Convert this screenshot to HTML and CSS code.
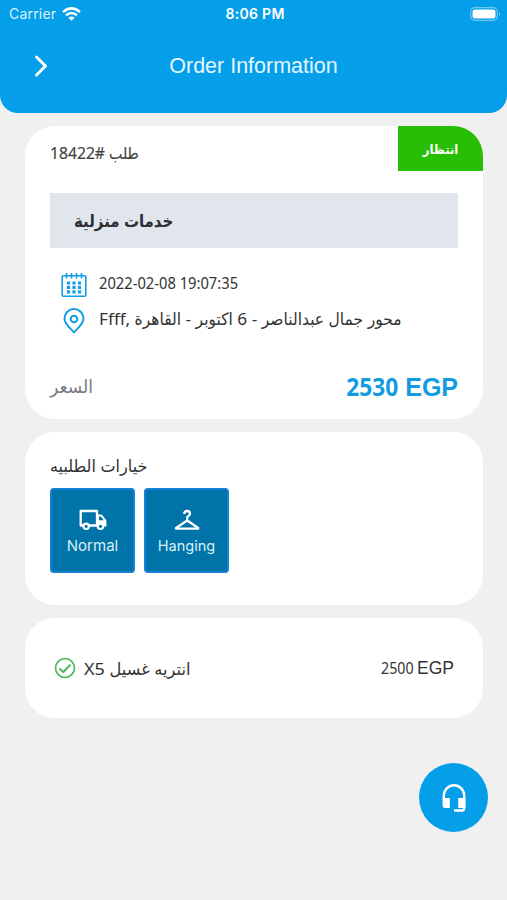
FILE: index.html
```html
<!DOCTYPE html>
<html lang="ar">
<head>
<meta charset="utf-8">
<title>Order Information</title>
<link rel="stylesheet" href="styles.css">
</head>
<body>
<header class="header">
  <div class="status">
    <div class="carrier"><span>Carrier</span>
      <svg width="19" height="14" viewBox="0 0 19 14" fill="none" stroke="#fff" stroke-width="2.5"><path d="M1 5.1Q9.500-2.300 18 5.100M4 8.300Q9.500 3.700 15 8.300"/><path d="M6.300 10.700Q9.500 8.200 12.700 10.700L9.500 13.800Z" fill="#fff" stroke="none"/></svg>
    </div>
    <div class="clock">8:06 PM</div>
    <svg class="battery" width="31" height="14" viewBox="0 0 31 14"><rect x=".7" y=".7" width="26.600" height="12.600" rx="4" fill="none" stroke="#6ec8f5" stroke-width="1.200"/><rect x="2.500" y="2.500" width="23" height="9" rx="2.300" fill="#fff"/><path d="M29 5q2.500 2 0 4z" fill="#6ec8f5"/></svg>
  </div>
  <div class="titlebar">
    <svg class="chevron" width="14" height="24" viewBox="0 0 14 24" fill="none" stroke="#fff" stroke-width="3" stroke-linecap="round" stroke-linejoin="round"><path d="M2.500 3L11.500 12L2.500 21"/></svg>
    <h1>Order Information</h1>
  </div>
</header>
<main>
  <section class="card order">
    <div class="order-top">
      <div class="order-id" dir="rtl"><span class="t-id">طلب #&rlm;18422</span></div>
      <div class="badge"><span class="t-badge">انتظار</span></div>
    </div>
    <div class="category"><span class="t-cat">خدمات منزلية</span></div>
    <div class="detail">
      <svg width="26" height="26" viewBox="0 0 26 26" fill="none" stroke="#139de5" stroke-width="1.600"><rect x="1.200" y="3.800" width="23.600" height="20.400" rx="1"/><path d="M5.500 1V6.500M10.500 1V6.500M15.500 1V6.500M20.500 1V6.500"/><path stroke-width="3.200" stroke-dasharray="3.200 2.300" d="M5.900 11H20.100M5.900 15.400H20.100M5.900 19.800H20.100"/></svg>
      <span class="t-date">2022-02-08 19:07:35</span>
    </div>
    <div class="detail place">
      <svg width="26" height="26" viewBox="0 0 26 26" fill="none" stroke="#139de5" stroke-width="2"><path d="M13 24.500C11 21.500 3.500 16.500 3.500 10.500A9.500 9.500 0 0 1 22.500 10.500C22.500 16.500 15 21.500 13 24.500Z" stroke-linejoin="round"/><circle cx="13" cy="11" r="3.300"/></svg>
      <span class="t-addr">Ffff, محور جمال عبدالناصر - 6 اكتوبر - القاهرة</span>
    </div>
    <div class="total"><span class="t-label">السعر</span><strong><span class="t-num">2530</span> <span class="t-cur">EGP</span></strong></div>
  </section>
  <section class="card options">
    <h2><span class="t-opt">خيارات الطلبيه</span></h2>
    <div class="tiles">
      <div class="tile">
        <svg width="28" height="22" viewBox="0 0 28 22"><path fill="none" stroke="#fff" stroke-width="2.300" stroke-linejoin="round" d="M4 16.500H1.700V2H18V16.500H10"/><path fill="#fff" fill-rule="evenodd" d="M18 5.500H22.800L27.400 11.500V17.600H17V5.500ZM20 7.600V11.300H24.800L21.900 7.600Z"/><g fill="#0073a8" stroke="#fff" stroke-width="2.200"><circle cx="7.200" cy="17.300" r="2.700"/><circle cx="21.500" cy="17.300" r="2.700"/></g></svg>
        <span>Normal</span>
      </div>
      <div class="tile">
        <svg width="28" height="22" viewBox="0 0 28 22" fill="none" stroke="#fff" stroke-width="2.300" stroke-linejoin="round"><path d="M11.200 5Q11.200 2 14 2Q17 2 17 4.800Q17 6.500 14.200 8V11.500L3 19Q2.800 19.700 3.500 19.700H24.700Q25.400 19.700 25.200 19L14.200 11.500"/></svg>
        <span class="hang">Hanging</span>
      </div>
    </div>
  </section>
  <section class="card item">
    <svg width="22" height="22" viewBox="0 0 22 22" fill="none" stroke="#4fb759" stroke-width="1.700"><circle cx="11" cy="11" r="9.500"/><path d="M5.500 11.500L9.300 15L16.300 7.800" stroke-width="2"/></svg>
    <span class="name"><span class="t-item">X5 انتريه غسيل</span></span>
    <span class="price"><span class="t-pnum">2500</span> <span class="t-pcur">EGP</span></span>
  </section>
</main>
<div class="support">
  <svg width="26" height="30" viewBox="0 0 26 30" fill="none" stroke="#fff" stroke-width="2.400"><path d="M2.800 17V12.500A10.200 10.200 0 0 1 23.200 12.500V25Q23.200 27.500 21 27.500H13"/><path fill="#fff" stroke="none" d="M1.600 15H8.800V25H4.200Q1.600 25 1.600 22.500ZM17.200 15H24.400V25H17.200Z"/></svg>
</div>
</body>
</html>
```
FILE: styles.css
```css
* { box-sizing: border-box; }
body { margin: 0; height: 900px; background: #f0f0f0; color: #333; font-family: "Noto Sans", "DejaVu Sans Condensed", "DejaVu Sans", sans-serif; overflow: hidden; }
svg { display: block; flex: none; }
.header { height: 113px; background: #049fe8; border-radius: 0 0 18px 18px; color: #fff; }
.status { height: 28px; padding: 0 6px 1px 9px; display: grid; grid-template-columns: 1fr auto 1fr; align-items: center; font-family: Inter, sans-serif; font-size: 14px; }
.carrier { display: flex; gap: 6px; align-items: center; letter-spacing: .2px; color: #dcf3fe; }
.clock { font-weight: 600; letter-spacing: .3px; }
.battery { justify-self: end; }
.titlebar { height: 76px; display: grid; grid-template-columns: 34px 1fr 34px; align-items: center; }
.chevron { justify-self: end; margin-right: -14px; }
h1 { margin: 0; text-align: center; font: 400 21.500px/24px "Liberation Sans", sans-serif; color: #e4f6ff; padding-bottom: 1px; }
main { padding: 13px 24px 0 25px; display: flex; flex-direction: column; gap: 13px; }
.card { background: #fff; border-radius: 30px; }
span[class^="t-"] { display: inline-block; white-space: nowrap; transform-origin: left center; }
.order { height: 293px; padding: 0 25px; overflow: hidden; }
.order-top { height: 67px; display: flex; justify-content: space-between; margin-right: -25px; }
.order-id { line-height: 55px; font-size: 16px; color: #444; -webkit-text-stroke: .2px; }
.t-id, .t-cat { transform: scaleX(.98); }
.badge { width: 85px; height: 45px; background: #27be03; color: #fff; display: flex; align-items: center; justify-content: center; font-size: 13px; font-weight: 700; }
.category { height: 55px; background: #e1e6ed; padding-left: 24px; line-height: 55px; font-size: 17px; font-weight: 700; color: #2d3035; }
.detail { display: flex; align-items: center; gap: 12px; padding-left: 11px; margin-top: 24px; height: 26px; line-height: 26px; font-size: 16px; }
.place { margin-top: 10px; }
.t-date { transform: scaleX(.92); margin-top: -5px; }
.t-addr { font-size: 17px; transform: scaleX(1.015); margin-top: -4px; }
.total { display: flex; justify-content: space-between; align-items: center; margin-top: 34px; height: 36px; line-height: 30px; }
.t-label { color: #777c86; font-size: 18px; transform: scaleX(1.06); }
.total strong { color: #129be0; font-size: 25px; }
span.t-num { transform: scaleX(.91); transform-origin: right center; }
.t-cur, .t-pcur { font-family: "Liberation Sans", sans-serif; }
.options { height: 173px; padding: 20px 25px; }
h2 { margin: 0 0 8px; font-size: 17px; line-height: 28px; font-weight: 400; color: #333; }
.t-opt { transform: scaleX(1.045); }
.tiles { display: flex; gap: 9px; }
.tile { width: 85px; height: 85px; background: #0073a8; border: 2px solid #1680d2; border-radius: 4px; padding-top: 19px; display: flex; flex-direction: column; align-items: center; gap: 5px; color: #d9eef7; font: 15px/20px Inter, sans-serif; }
.hang { font-size: 14.5px; }
.item { height: 100px; padding: 0 29px; display: flex; align-items: center; gap: 8px; font-size: 16px; }
.name { flex: 1; font-size: 17px; }
.t-item { transform: scaleX(1.06); margin-top: -2px; }
span.t-pnum { transform: scaleX(.89); transform-origin: right center; }
.t-pcur { font-size: 17.5px; margin-left: -1px; }
.support { position: absolute; left: 419px; top: 763px; width: 69px; height: 69px; border-radius: 50%; background: #049fe8; display: grid; place-items: center; }
```
